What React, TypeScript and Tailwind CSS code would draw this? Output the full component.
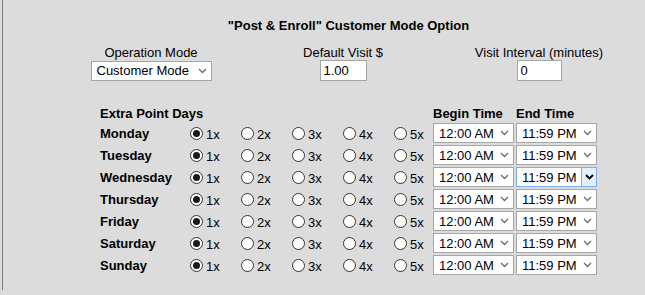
const DAYS = ['Monday', 'Tuesday', 'Wednesday', 'Thursday', 'Friday', 'Saturday', 'Sunday']
const MULTS = ['1x', '2x', '3x', '4x', '5x']

function Chevron({ dark }: { dark?: boolean }) {
  return (
    <svg width="9" height="6" viewBox="0 0 9 6">
      <path
        d="M1 1 L4.5 4.5 L8 1"
        fill="none"
        stroke={dark ? '#000' : '#6a6a6a'}
        strokeWidth={dark ? 1.8 : 1.3}
      />
    </svg>
  )
}

function Select({ value, w, focused }: { value: string; w: string; focused?: boolean }) {
  if (focused) {
    return (
      <div className={`${w} flex h-[20px] items-stretch border border-[#7aaee6] bg-white`}>
        <span className="flex flex-1 items-center pl-[5px] text-[13px] leading-[15px]">{value}</span>
        <span className="flex w-[15px] items-center justify-center border-l border-[#7aaee6] bg-[#e3effb]">
          <Chevron dark />
        </span>
      </div>
    )
  }
  return (
    <div className={`${w} flex h-[20px] items-center border border-[#a6a6a6] bg-white pl-[5px] pr-[4px]`}>
      <span className="flex-1 text-[13px] leading-[15px]">{value}</span>
      <Chevron />
    </div>
  )
}

function Radio({ checked }: { checked?: boolean }) {
  return (
    <span className="flex h-[13px] w-[13px] items-center justify-center rounded-full border border-[#333] bg-white">
      {checked && <span className="h-[7px] w-[7px] rounded-full bg-[#1a1a1a]" />}
    </span>
  )
}

export default function App() {
  return (
    <div className="h-[295px] w-[645px] overflow-hidden bg-[#dcdcdc] text-black [font-family:'Liberation_Sans',Arial,sans-serif]">
      <div className="ml-[2px] h-[290px] border-l border-[#7a7a7a]">
        <div className="ml-[52px] w-[587px] pt-[18px]">
          <h1 className="text-center text-[13px] font-bold leading-[15px]">"Post &amp; Enroll" Customer Mode Option</h1>
          <div className="mt-[12px] flex text-[13px] leading-[15px]">
            <div className="w-[192px] text-center">Operation Mode</div>
            <div className="w-[192px] text-center">Default Visit $</div>
            <div className="w-[200px] text-center">Visit Interval (minutes)</div>
          </div>
          <div className="flex h-[21px] items-center">
            <div className="flex w-[192px] justify-center">
              <Select value="Customer Mode" w="w-[121px]" />
            </div>
            <div className="flex w-[192px] justify-center">
              <div className="h-[21px] w-[47px] border border-[#a6a6a6] bg-white pl-[3px] text-[13px] leading-[19px]">1.00</div>
            </div>
            <div className="flex w-[200px] justify-center">
              <div className="h-[21px] w-[45px] border border-[#a6a6a6] bg-white pl-[3px] text-[13px] leading-[19px]">0</div>
            </div>
          </div>
        </div>

        <div className="ml-[97px] mt-[19px] text-[13px] leading-[15px]">
          <div className="flex h-[22px] items-end pb-[1px] font-bold">
            <div className="w-[333px]">Extra Point Days</div>
            <div className="w-[83px]">Begin Time</div>
            <div>End Time</div>
          </div>
          {DAYS.map((day) => (
            <div key={day} className="flex h-[22px] items-center">
              <div className="w-[90px] font-bold">{day}</div>
              {MULTS.map((m, i) => (
                <label key={m} className={`flex items-center ${i === 4 ? 'w-[39px]' : 'w-[51px]'}`}>
                  <Radio checked={i === 0} />
                  <span className="ml-[3px] mt-[3px]">{m}</span>
                </label>
              ))}
              <Select value="12:00 AM" w="w-[81px]" />
              <div className="ml-[2px]">
                <Select value="11:59 PM" w="w-[81px]" focused={day === 'Wednesday'} />
              </div>
            </div>
          ))}
        </div>
      </div>
      <div className="ml-[27px] mt-[2px] text-[13px] leading-[15px] text-[#0000ee] underline">
        Lookup/hide customer point settings
      </div>
    </div>
  )
}
